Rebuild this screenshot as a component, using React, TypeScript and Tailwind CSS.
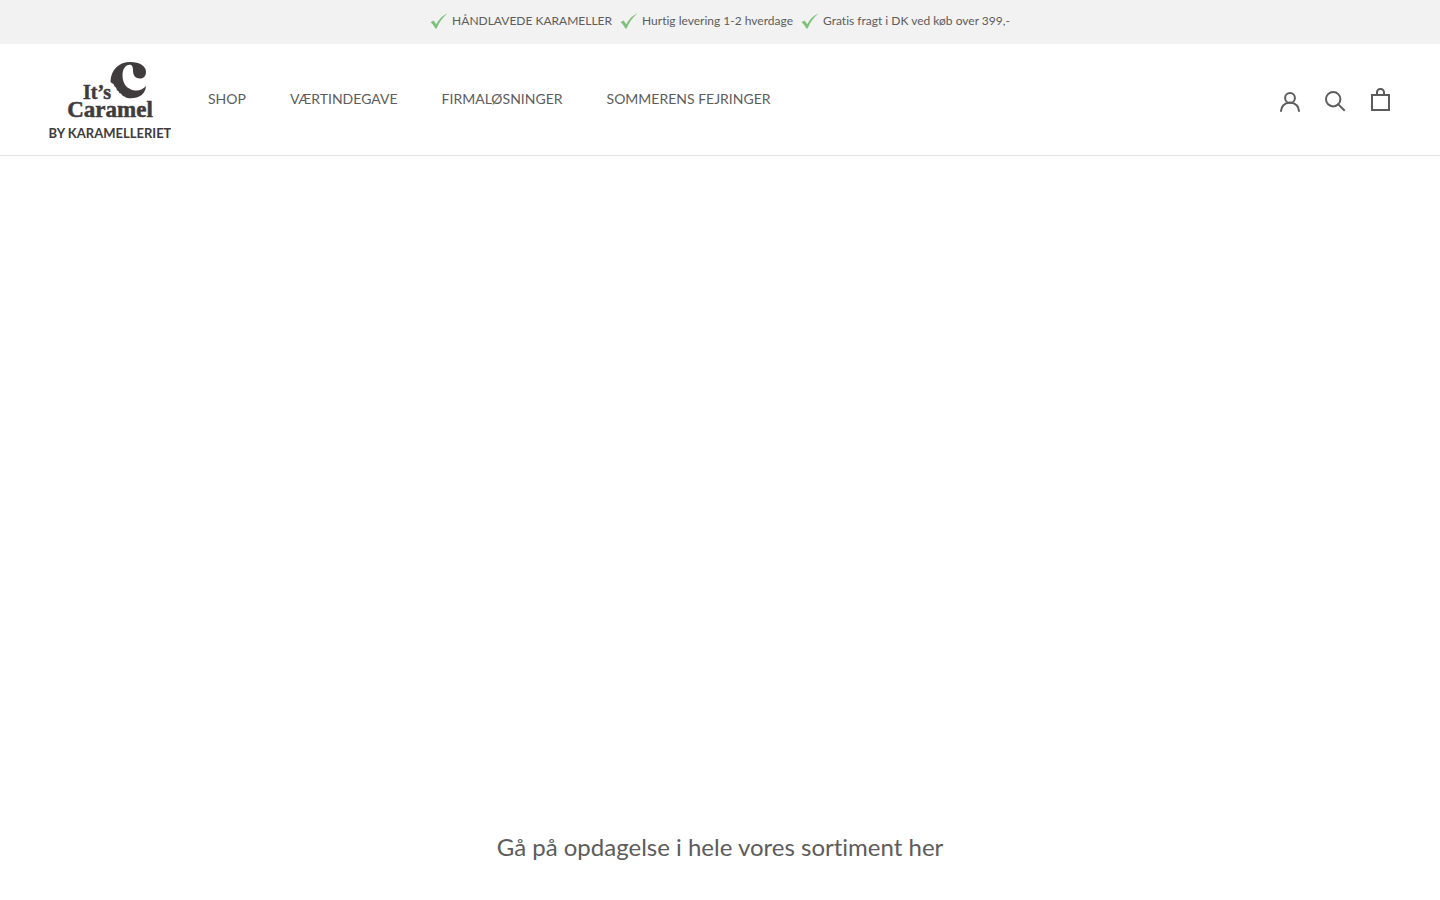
const perks = [
  'HÅNDLAVEDE KARAMELLER',
  'Hurtig levering 1-2 hverdage',
  'Gratis fragt i DK ved køb over 399,-',
];

const links = ['SHOP', 'VÆRTINDEGAVE', 'FIRMALØSNINGER', 'SOMMERENS FEJRINGER'];

function Check() {
  return (
    <svg className="h-4 w-[18px]" viewBox="0 0 18 16" aria-hidden="true">
      <path d="M0.5 9.2L3.6 7.6L6.2 11.2C9 6.2 12.600 2.400 17.600 0.300C12.800 4.200 9.200 9.400 6.600 15.600H5.300C4.200 12.800 2.600 10.700 0.500 9.200Z" fill="#7fc07a" />
    </svg>
  );
}

function Logo() {
  return (
    <svg className="h-20 w-[122px]" viewBox="0 0 122 80" fill="#403b3c" role="img" aria-label="It's Caramel by Karamelleriet">
      <path d="M97 12C97 6 90.500 2 81.500 2C70 2 62 9.500 61.500 21C61.500 23.500 64.500 23 65 25C65 27 67.500 27 67.500 28.800C67.500 31 70.500 31 70.200 33C73 33 72.500 36 75.500 36.500C77 38 79.500 38.300 82 38.300C90 38.300 96.500 34 97 26C93.500 29.800 90 31 86 30.500C78 29.500 73.500 23.500 73.500 15.500C73.500 9 76.500 4.800 80.500 4.800C83.500 4.800 84 7.500 84 10.500C84 15.500 86.500 18.500 91 18.500C94.800 18.500 97 15.800 97 12Z" />
      <g fontFamily="'Liberation Serif', serif" fontWeight="700" stroke="#403b3c" strokeWidth="0.5">
        <text x="34" y="39" fontSize="20">It’s</text>
        <text x="61" y="57" textAnchor="middle" fontSize="23">Caramel</text>
      </g>
      <text x="61" y="78" textAnchor="middle" fontFamily="Lato, sans-serif" fontWeight="700" fontSize="13">BY KARAMELLERIET</text>
    </svg>
  );
}

export default function App() {
  return (
    <div className="min-h-screen bg-white font-['Lato',sans-serif] text-[#5c5c5c] [font-variant-ligatures:none]">
      <div className="flex h-11 items-center justify-center gap-2 bg-[#f2f2f2] pb-0.5 text-xs">
        {perks.map((perk) => (
          <span key={perk} className="flex items-center gap-1">
            <Check />
            {perk}
          </span>
        ))}
      </div>

      <header className="flex h-28 items-center justify-between border-b border-[#e4e4e4] pr-[50px] pl-[49px]">
        <div className="flex items-center gap-[37px]">
          <a href="#forside"><Logo /></a>
          <nav className="flex gap-11 pb-0.5 text-sm leading-6">
            {links.map((link) => (
              <a key={link} href="#menu">{link}</a>
            ))}
          </nav>
        </div>
        <div className="flex items-center gap-[25px]">
          <a href="#konto" aria-label="Konto" className="pt-1">
            <svg className="size-5" viewBox="0 0 20 20" fill="none" stroke="currentColor" strokeWidth="2">
              <path d="M1 19c0-4.519 3.663-8.182 8.182-8.182h1.636C15.337 10.818 19 14.481 19 19" strokeLinecap="round" />
              <circle cx="10" cy="5.909" r="4.909" />
            </svg>
          </a>
          <button type="button" aria-label="Søg" className="pt-1">
            <svg className="size-[21px]" viewBox="0 0 21 21" fill="none" stroke="currentColor" strokeWidth="2" strokeLinecap="square">
              <path d="M19 19l-5.710-5.710" />
              <circle cx="8.200" cy="8.200" r="7.200" />
            </svg>
          </button>
          <button type="button" aria-label="Kurv">
            <svg className="h-[23px] w-[19px]" viewBox="0 0 19 23" fill="currentColor">
              <path d="M0 22.985V5.995L2 6v.03l17-.014v16.968H0zm17-15H2v13h15v-13zm-5-2.882c0-2.040-.493-3.203-2.500-3.203-2 0-2.500 1.164-2.500 3.203v.912H5V4.647C5 1.190 7.274 0 9.500 0 11.517 0 14 1.354 14 4.647v1.368h-2v-.912z" />
            </svg>
          </button>
        </div>
      </header>

      <main>
        <section className="h-[639px]" aria-label="Udvalgte karameller" />
        <h2 className="px-6 pt-8 pb-9 text-center text-2xl leading-10">Gå på opdagelse i hele vores sortiment her</h2>
      </main>
    </div>
  );
}
